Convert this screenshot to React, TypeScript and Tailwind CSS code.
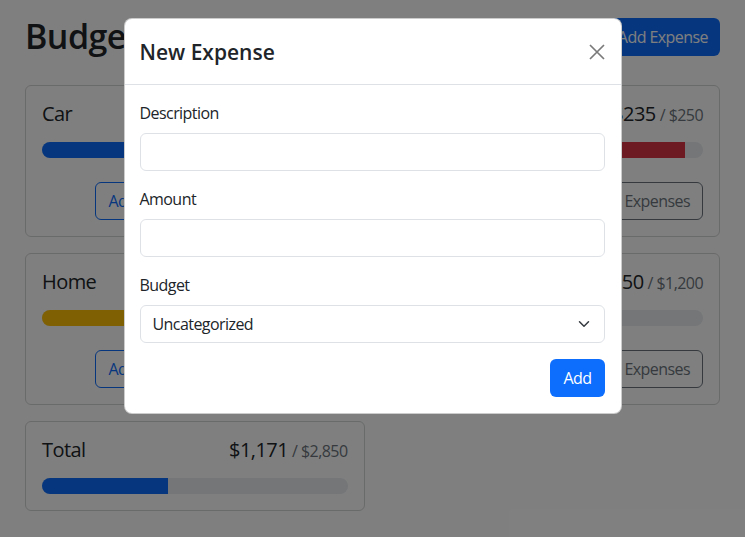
import React from "react";

interface Budget {
  name: string;
  amount: number;
  max: number;
}

const budgets: Budget[] = [
  { name: "Car", amount: 300, max: 1000 },
  { name: "Food", amount: 235, max: 250 },
  { name: "Home", amount: 286, max: 400 },
  { name: "Utilities", amount: 350, max: 1200 },
];

const fmt = (n: number) =>
  "$" + n.toLocaleString("en-US", { maximumFractionDigits: 0 });

const barColor = (amount: number, max: number) => {
  const ratio = amount / max;
  if (ratio < 0.5) return "bg-[#0d6efd]";
  if (ratio < 0.75) return "bg-[#ffc107]";
  return "bg-[#dc3545]";
};

const BudgetCard = ({
  name,
  amount,
  max,
  hideButtons,
}: Budget & { hideButtons?: boolean }) => (
  <div className="rounded-[6px] border border-[#d3d4d5] bg-white p-4">
    <div className="mb-4 flex h-6 items-baseline justify-between text-[20px] leading-6">
      <div className="mr-2">{name}</div>
      <div className="flex items-baseline">
        {fmt(amount)}
        <span className="ml-1 text-[16px] text-[#6c757d]">/ {fmt(max)}</span>
      </div>
    </div>
    <div className="h-4 overflow-hidden rounded-full bg-[#e9ecef]">
      <div
        className={"h-full " + barColor(amount, max)}
        style={{ width: (Math.min(amount / max, 1) * 100).toFixed(2) + "%" }}
      />
    </div>
    {!hideButtons && (
      <div className="mt-6 flex items-center justify-end gap-2">
        <button className="h-[38px] rounded-[6px] border border-[#0d6efd] px-3 text-[16px] text-[#0d6efd]">
          Add Expense
        </button>
        <button className="h-[38px] rounded-[6px] border border-[#6c757d] px-3 text-[16px] text-[#6c757d]">
          View Expenses
        </button>
      </div>
    )}
  </div>
);

const Field = ({ label, children }: { label: string; children: React.ReactNode }) => (
  <div className="mb-4">
    <div className="mb-2 text-[16px] leading-6">{label}</div>
    {children}
  </div>
);

export default function App() {
  return (
    <div className="relative h-[537px] overflow-hidden bg-white font-['Open_Sans',sans-serif] tracking-[-0.035em] text-[#212529]">
      <div className="px-[25px] pt-[14px]">
        <div className="mb-[26px] flex h-[45px] items-center gap-2">
          <h1 className="mr-auto text-[34px] font-semibold leading-[45px]">Budgets</h1>
          <button className="h-[38px] rounded-[6px] bg-[#0d6efd] px-3 text-[16px] text-white">
            Add Budget
          </button>
          <button className="h-[38px] rounded-[6px] bg-[#0d6efd] px-3 text-[16px] text-white">
            Add Expense
          </button>
        </div>
        <div className="grid grid-cols-2 items-start gap-4">
          {budgets.map((b) => (
            <BudgetCard key={b.name} {...b} />
          ))}
          <BudgetCard name="Total" amount={1171} max={2850} hideButtons />
        </div>
      </div>

      {/* backdrop */}
      <div className="absolute inset-0 bg-black/50" />

      <div className="absolute inset-0 flex justify-center pt-[18px]">
        <div className="h-fit w-[498px] rounded-[8px] border border-black/20 bg-white">
          <div className="flex h-[66px] items-center justify-between border-b border-[#dee2e6] pl-4 pr-4">
            <h5 className="-ml-px text-[21px] font-semibold leading-[30px] tracking-normal">New Expense</h5>
            <button className="flex h-4 w-4 items-center justify-center text-[#7a7a7a]">
              <svg width="16" height="16" viewBox="0 0 16 16" fill="none" stroke="currentColor" strokeWidth="1.7">
                <path d="M1 1L15 15M15 1L1 15" />
              </svg>
            </button>
          </div>
          <div className="p-4 pl-[15px]">
            <Field label="Description">
              <input className="h-[38px] w-full rounded-[6px] border border-[#dee2e6] px-3 outline-none" />
            </Field>
            <Field label="Amount">
              <input className="h-[38px] w-full rounded-[6px] border border-[#dee2e6] px-3 outline-none" />
            </Field>
            <Field label="Budget">
              <div className="flex h-[38px] w-full items-center justify-between rounded-[6px] border border-[#dee2e6] pl-3 pr-3">
                <span className="text-[16px]">Uncategorized</span>
                <svg width="16" height="12" viewBox="0 0 16 16" fill="none" stroke="#343a40" strokeWidth="2" strokeLinecap="round" strokeLinejoin="round">
                  <path d="m2 5 6 6 6-6" />
                </svg>
              </div>
            </Field>
            <div className="flex justify-end">
              <button className="h-[38px] rounded-[6px] bg-[#0d6efd] px-[13px] text-[16px] text-white">
                Add
              </button>
            </div>
          </div>
        </div>
      </div>
    </div>
  );
}
